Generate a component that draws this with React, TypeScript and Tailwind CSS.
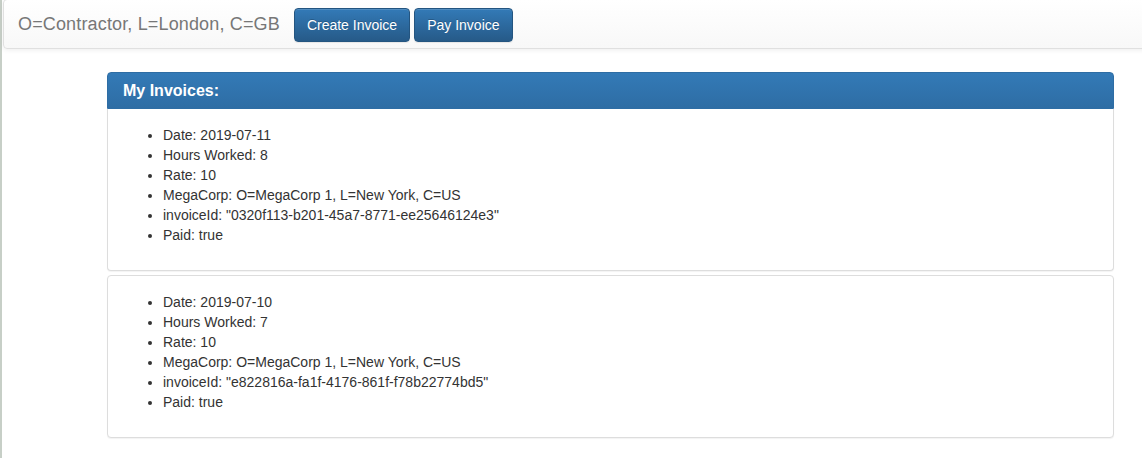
import React from 'react';

interface Invoice {
  date: string;
  hoursWorked: number;
  rate: number;
  megaCorp: string;
  invoiceId: string;
  paid: boolean;
}

const invoices: Invoice[] = [
  {
    date: '2019-07-11',
    hoursWorked: 8,
    rate: 10,
    megaCorp: 'O=MegaCorp 1, L=New York, C=US',
    invoiceId: '0320f113-b201-45a7-8771-ee25646124e3',
    paid: true,
  },
  {
    date: '2019-07-10',
    hoursWorked: 7,
    rate: 10,
    megaCorp: 'O=MegaCorp 1, L=New York, C=US',
    invoiceId: 'e822816a-fa1f-4176-861f-f78b22774bd5',
    paid: true,
  },
];

const btnClass =
  'h-[34px] px-3 rounded-[4px] border border-[#245580] bg-gradient-to-b from-[#337ab7] to-[#265a88] text-white text-[14px] leading-[20px] [text-shadow:0_-1px_0_rgba(0,0,0,0.2)] shadow-[inset_0_1px_0_rgba(255,255,255,0.15),0_1px_1px_rgba(0,0,0,0.075)]';

const InvoiceCard: React.FC<{ invoice: Invoice; first?: boolean }> = ({ invoice, first }) => (
  <div
    className={`border border-[#ddd] bg-white shadow-[0_1px_1px_rgba(0,0,0,0.05)] ${
      first ? 'border-t-0 rounded-b-[4px]' : 'mt-[4px] rounded-[4px]'
    }`}
  >
    <div className="pt-[16px] px-[15px] pb-[15px]">
      <ul className="list-disc pl-10 mb-[10px] text-[14px] leading-[20px] text-[#333]">
        <li>Date: {invoice.date}</li>
        <li>Hours Worked: {invoice.hoursWorked}</li>
        <li>Rate: {invoice.rate}</li>
        <li>MegaCorp: {invoice.megaCorp}</li>
        <li>invoiceId: "{invoice.invoiceId}"</li>
        <li>Paid: {invoice.paid ? 'true' : 'false'}</li>
      </ul>
    </div>
  </div>
);

export default function App() {
  return (
    <div className="flex w-[1142px] h-[458px] bg-white overflow-hidden font-['Liberation_Sans',Arial,sans-serif]">
      {/* window edge */}
      <div className="w-[2px] shrink-0 bg-[#c7cfc7]" />
      <div className="flex-1 pl-px">
        {/* Navbar */}
        <nav className="h-[50px] -mt-px -mr-2 flex items-center border border-[#e0e0e0] rounded-[4px] bg-gradient-to-b from-white to-[#f8f8f8] shadow-[inset_0_1px_0_rgba(255,255,255,0.15),0_1px_5px_rgba(0,0,0,0.075)]">
          <span className="pl-[14px] pr-[14px] text-[18px] leading-[20px] tracking-[0.15px] text-[#777]">
            O=Contractor, L=London, C=GB
          </span>
          <div className="flex gap-1 pt-px">
            <button className={btnClass}>Create Invoice</button>
            <button className={btnClass}>Pay Invoice</button>
          </div>
        </nav>

        {/* Invoices */}
        <div className="pl-[104px] pr-[28px] pt-[23px]">
          <div className="h-[37px] px-[15px] flex items-center rounded-t-[4px] border border-[#2e6da4] bg-gradient-to-b from-[#337ab7] to-[#2e6da4]">
            <h3 className="text-[16px] font-bold text-white leading-[18px]">My Invoices:</h3>
          </div>
          {invoices.map((inv, i) => (
            <InvoiceCard key={inv.invoiceId} invoice={inv} first={i === 0} />
          ))}
        </div>
      </div>
    </div>
  );
}
